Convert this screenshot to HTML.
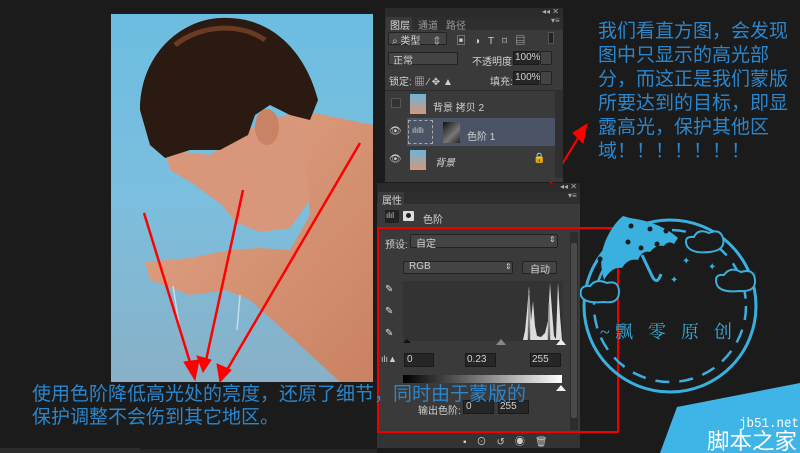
<!DOCTYPE html>
<html><head><meta charset="utf-8">
<style>
*{margin:0;padding:0;box-sizing:border-box}
body{width:800px;height:453px;background:#1b1b1b;position:relative;overflow:hidden;font-family:"Liberation Sans","Noto Sans CJK SC",sans-serif;}
.a{position:absolute}
.t{font-size:10px;color:#d0d0d0;white-space:nowrap;font-family:"Liberation Sans","Noto Sans CJK SC",sans-serif}
.box{background:#262626;border:1px solid #1a1a1a}
.sel{background:#444;border:1px solid #222;border-radius:2px}
.blue{color:#2b86cc;font-family:"Liberation Sans","Noto Sans CJK SC",sans-serif;font-size:19px;white-space:nowrap}
</style></head><body>

<svg class="a" style="left:0;top:0" width="800" height="453">
<defs>
<linearGradient id="bg" x1="0" y1="0" x2="0" y2="1"><stop offset="0" stop-color="#6cbde0"/><stop offset="0.5" stop-color="#7cbfdf"/><stop offset="1" stop-color="#88b0c6"/></linearGradient>
<linearGradient id="sk" x1="0" y1="0" x2="1" y2="1"><stop offset="0" stop-color="#e2a587"/><stop offset="1" stop-color="#c98262"/></linearGradient>
</defs>
<rect x="111" y="14" width="262" height="368" fill="url(#bg)"/>
<path d="M300 110 L373 125 L373 382 L340 382 L300 345 L250 300 L225 290 L190 295 L150 280 L145 262 L190 258 L230 250 L260 248 L290 250 L310 215 Z" fill="url(#sk)"/>
<path d="M165 150 L210 155 L245 130 L300 110 L310 200 L290 228 L260 232 L235 222 L222 205 L195 185 L170 170 Z" fill="#d8977a"/>
<path d="M140 110 C140 55 180 20 220 18 C270 15 305 50 318 100 L310 120 L290 115 L270 105 L255 115 L248 135 L220 150 L190 150 L165 158 L150 145 Z" fill="#2b1a12"/>
<path d="M175 45 C200 25 240 22 265 40" stroke="#6a3a22" stroke-width="5" fill="none"/>
<ellipse cx="267" cy="127" rx="12" ry="18" fill="#c98264"/>
<path d="M173 286 L180 330 M240 295 L237 330" stroke="#dfeef5" stroke-width="1.5" opacity=".7"/>
<g stroke="#f00" fill="#f00">
<line x1="144" y1="213" x2="193" y2="372" stroke-width="2.5"/><polygon points="184,362 199,360 195,380"/>
<line x1="243" y1="190" x2="205" y2="365" stroke-width="2.5"/><polygon points="197,356 211,360 203,372"/>
<line x1="360" y1="143" x2="227" y2="370" stroke-width="2.5"/><polygon points="217,364 231,370 220,382"/>
<line x1="468" y1="320" x2="578" y2="138" stroke-width="2"/><polygon points="573,133 587,124 583,143"/>
<line x1="472" y1="345" x2="520" y2="343" stroke-width="2"/><polygon points="515,336 535,343 515,350"/>
</g>
</svg>

<!-- layers panel -->
<div class="a" style="left:385px;top:8px;width:178px;height:174px;background:#3a3a3a"></div>
<div class="a" style="left:385px;top:8px;width:178px;height:9px;background:#2b2b2b"></div>
<div class="a t" style="left:542px;top:7px;font-size:8px;color:#aaa">◂◂ ✕</div>
<div class="a" style="left:385px;top:17px;width:178px;height:13px;background:#2e2e2e"></div>
<div class="a" style="left:386px;top:17px;width:26px;height:13px;background:#3a3a3a"></div>
<div class="a t" style="left:390px;top:17px;color:#ddd">图层</div>
<div class="a t" style="left:418px;top:17px;color:#999">通道</div>
<div class="a t" style="left:446px;top:17px;color:#999">路径</div>
<div class="a t" style="left:551px;top:16px;color:#aaa;font-size:8px">▾≡</div>
<div class="a sel" style="left:388px;top:32px;width:59px;height:13px"></div>
<div class="a t" style="left:392px;top:32px">⌕ 类型 &nbsp;&nbsp;&nbsp;&nbsp;⇕</div>
<div class="a t" style="left:456px;top:32px;color:#ccc;letter-spacing:8px">▣◑T⌑▤</div>
<div class="a" style="left:548px;top:32px;width:6px;height:12px;background:#222;border:1px solid #555"></div>
<div class="a sel" style="left:388px;top:52px;width:70px;height:13px"></div>
<div class="a t" style="left:393px;top:52px">正常</div>
<div class="a t" style="left:472px;top:53px">不透明度:</div>
<div class="a box" style="left:513px;top:51px;width:26px;height:14px"></div>
<div class="a t" style="left:515px;top:52px">100%</div>
<div class="a sel" style="left:540px;top:51px;width:12px;height:14px"></div>
<div class="a t" style="left:389px;top:73px">锁定: ▦ ⁄ ✥ ▲</div>
<div class="a t" style="left:490px;top:73px">填充:</div>
<div class="a box" style="left:513px;top:71px;width:26px;height:14px"></div>
<div class="a t" style="left:515px;top:72px">100%</div>
<div class="a sel" style="left:540px;top:71px;width:12px;height:14px"></div>
<div class="a" style="left:385px;top:90px;width:170px;height:1px;background:#2a2a2a"></div>
<div class="a" style="left:391px;top:98px;width:10px;height:10px;border:1px solid #555;background:#333"></div>
<div class="a" style="left:410px;top:94px;width:16px;height:20px;background:linear-gradient(#6bb5d8,#d8977a)"></div>
<div class="a t" style="left:433px;top:99px">背景 拷贝 2</div>
<div class="a" style="left:407px;top:118px;width:148px;height:28px;background:#4b5466"></div>
<div class="a t" style="left:389px;top:126px;color:#ccc">👁</div>
<div class="a" style="left:408px;top:120px;width:25px;height:24px;border:1px dashed #aaa"></div>
<div class="a t" style="left:412px;top:126px;font-size:8px">ılıllı</div>
<div class="a" style="left:443px;top:122px;width:17px;height:21px;background:linear-gradient(135deg,#111,#777 60%,#222)"></div>
<div class="a t" style="left:467px;top:128px">色阶 1</div>
<div class="a t" style="left:389px;top:154px;color:#ccc">👁</div>
<div class="a" style="left:410px;top:150px;width:16px;height:20px;background:linear-gradient(#6bb5d8,#d8977a)"></div>
<div class="a t" style="left:435px;top:154px;font-style:italic">背景</div>
<div class="a t" style="left:533px;top:153px">🔒</div>
<div class="a" style="left:555px;top:90px;width:8px;height:88px;background:#2f2f2f"></div>

<!-- properties panel -->
<div class="a" style="left:377px;top:183px;width:203px;height:265px;background:#3a3a3a"></div>
<div class="a" style="left:377px;top:183px;width:203px;height:9px;background:#2b2b2b"></div>
<div class="a t" style="left:560px;top:182px;font-size:8px;color:#aaa">◂◂ ✕</div>
<div class="a" style="left:377px;top:192px;width:203px;height:12px;background:#2e2e2e"></div>
<div class="a" style="left:378px;top:192px;width:26px;height:12px;background:#3a3a3a"></div>
<div class="a t" style="left:382px;top:192px">属性</div>
<div class="a t" style="left:568px;top:191px;font-size:8px;color:#aaa">▾≡</div>
<div class="a" style="left:385px;top:210px;width:14px;height:13px;background:#222"></div>
<div class="a t" style="left:386px;top:211px;font-size:8px">ılıl</div>
<div class="a" style="left:403px;top:211px;width:11px;height:10px;background:#ddd;border-radius:1px"></div>
<div class="a" style="left:406px;top:213px;width:5px;height:5px;background:#222;border-radius:50%"></div>
<div class="a t" style="left:423px;top:211px">色阶</div>
<div class="a t" style="left:385px;top:236px">预设:</div>
<div class="a sel" style="left:410px;top:234px;width:148px;height:14px"></div>
<div class="a t" style="left:416px;top:235px">自定</div>
<div class="a t" style="left:549px;top:235px;font-size:8px">⇕</div>
<div class="a sel" style="left:403px;top:261px;width:110px;height:13px"></div>
<div class="a t" style="left:409px;top:261px">RGB</div>
<div class="a t" style="left:505px;top:262px;font-size:8px">⇕</div>
<div class="a sel" style="left:522px;top:261px;width:35px;height:13px"></div>
<div class="a t" style="left:530px;top:261px">自动</div>
<div class="a t" style="left:385px;top:284px;color:#ddd">✎<br><br>✎<br><br>✎</div>
<div class="a" style="left:403px;top:281px;width:160px;height:60px;background:#333"></div>
<svg class="a" style="left:403px;top:281px" width="160" height="62">
<path d="M120 59 L122 50 L124 30 L126 5 L128 40 L130 20 L132 45 L134 55 L138 56 L142 52 L145 40 L147 2 L149 30 L151 55 L153 58 L155 1 L157 35 L159 59 Z" fill="#ddd"/>
<path d="M125 59 L126 12 L127 59 M145 59 L146 22 L147 59" stroke="#999"/>
<polygon points="0,62 4,58 8,62" fill="#111"/>
</svg>
<div class="a" style="left:496px;top:339px;width:0;height:0;border-left:5px solid transparent;border-right:5px solid transparent;border-bottom:6px solid #888"></div>
<div class="a" style="left:556px;top:339px;width:0;height:0;border-left:5px solid transparent;border-right:5px solid transparent;border-bottom:6px solid #eee"></div>
<div class="a t" style="left:381px;top:354px;font-size:9px">ılı▲</div>
<div class="a box" style="left:404px;top:353px;width:30px;height:14px"></div><div class="a t" style="left:407px;top:354px">0</div>
<div class="a box" style="left:465px;top:353px;width:31px;height:14px"></div><div class="a t" style="left:467px;top:354px">0.23</div>
<div class="a box" style="left:530px;top:353px;width:31px;height:14px"></div><div class="a t" style="left:532px;top:354px">255</div>
<div class="a" style="left:403px;top:375px;width:159px;height:8px;background:linear-gradient(90deg,#000,#fff)"></div>
<div class="a" style="left:556px;top:385px;width:0;height:0;border-left:5px solid transparent;border-right:5px solid transparent;border-bottom:6px solid #eee"></div>
<div class="a t" style="left:418px;top:402px">输出色阶:</div>
<div class="a box" style="left:463px;top:400px;width:31px;height:14px"></div><div class="a t" style="left:466px;top:401px">0</div>
<div class="a box" style="left:498px;top:400px;width:31px;height:14px"></div><div class="a t" style="left:500px;top:401px">255</div>
<div class="a" style="left:570px;top:232px;width:8px;height:198px;background:#2d2d2d"></div>
<div class="a" style="left:571px;top:243px;width:6px;height:175px;background:#4a4a4a;border-radius:2px"></div>
<div class="a" style="left:377px;top:432px;width:203px;height:16px;background:#333"></div>
<div class="a t" style="left:463px;top:433px;color:#ccc;letter-spacing:10px">▪⊙↺◉🗑</div>
<div class="a" style="left:377px;top:227px;width:242px;height:206px;border:2px solid #e00"></div>

<div class="a" style="left:0;top:448px;width:140px;height:5px;background:#2c2c2c"></div>
<div class="a" style="left:140px;top:449px;width:237px;height:4px;background:#262626"></div>

<div class="a blue" style="left:598px;top:20px;line-height:24px">我们看直方图，会发现<br>图中只显示的高光部<br>分，而这正是我们蒙版<br>所要达到的目标，即显<br>露高光，保护其他区<br>域！！！！！！！</div>
<div class="a blue" style="left:32px;top:383px;line-height:23px">使用色阶降低高光处的亮度，还原了细节，同时由于蒙版的<br>保护调整不会伤到其它地区。</div>

<!-- stamp -->
<svg class="a" style="left:580px;top:200px" width="220" height="253">
<g stroke="#3ab0de" fill="none" stroke-width="2.5">
<circle cx="90" cy="106" r="86" stroke-width="3"/>
<circle cx="90" cy="106" r="76" stroke-dasharray="14 10"/>
<path d="M62 55 L72 76 Q77 86 81 74" stroke-width="3"/>
</g>
<path d="M43 16 L50 18 Q80 22 98 38 L94 44 Q88 40 84 46 Q76 44 70 52 Q62 50 58 60 Q48 58 42 68 Q32 66 24 80 Q18 60 25 42 Q32 25 43 16Z" fill="#3ab0de"/>
<g fill="#1b1b1b"><circle cx="51" cy="26" r="2.5"/><circle cx="70" cy="29" r="2.5"/><circle cx="86" cy="31" r="2.5"/><circle cx="48" cy="42" r="2.5"/><circle cx="61" cy="48" r="2.5"/><circle cx="77" cy="44" r="2.5"/><circle cx="20" cy="59" r="2.5"/></g>
<g fill="#1b1b1b" stroke="#3ab0de" stroke-width="2">
<path d="M107 46 Q103 36 114 37 Q118 28 129 33 Q140 28 143 38 Q146 50 130 52 Q112 54 107 46Z"/>
<path d="M137 85 Q133 74 144 75 Q150 66 161 72 Q174 68 175 80 Q176 92 160 91 Q141 93 137 85Z"/>
<path d="M1 96 Q-1 85 10 86 Q16 78 27 83 Q39 80 39 92 Q39 104 24 102 Q5 104 1 96Z"/>
</g>
<g fill="#3ab0de" font-size="10"><text x="102" y="64">✦</text><text x="128" y="70">✦</text><text x="90" y="83">✦</text></g>
<text x="20" y="138" fill="#3ab0de" font-size="18" font-family="Liberation Serif,Noto Serif CJK SC,serif" textLength="132" lengthAdjust="spacing">~飘 零 原 创</text>
<polygon points="80,253 97,207 220,183 220,253" fill="#3fb4e6"/>
<text x="159" y="227" fill="#fff" font-size="14" font-family="Liberation Mono,monospace" textLength="60" lengthAdjust="spacingAndGlyphs">jb51.net</text>
<text x="127" y="249" fill="#fff" font-size="22" font-family="Liberation Sans,Noto Sans CJK SC,sans-serif" textLength="90" lengthAdjust="spacingAndGlyphs">脚本之家</text>
</svg>
</body></html>
